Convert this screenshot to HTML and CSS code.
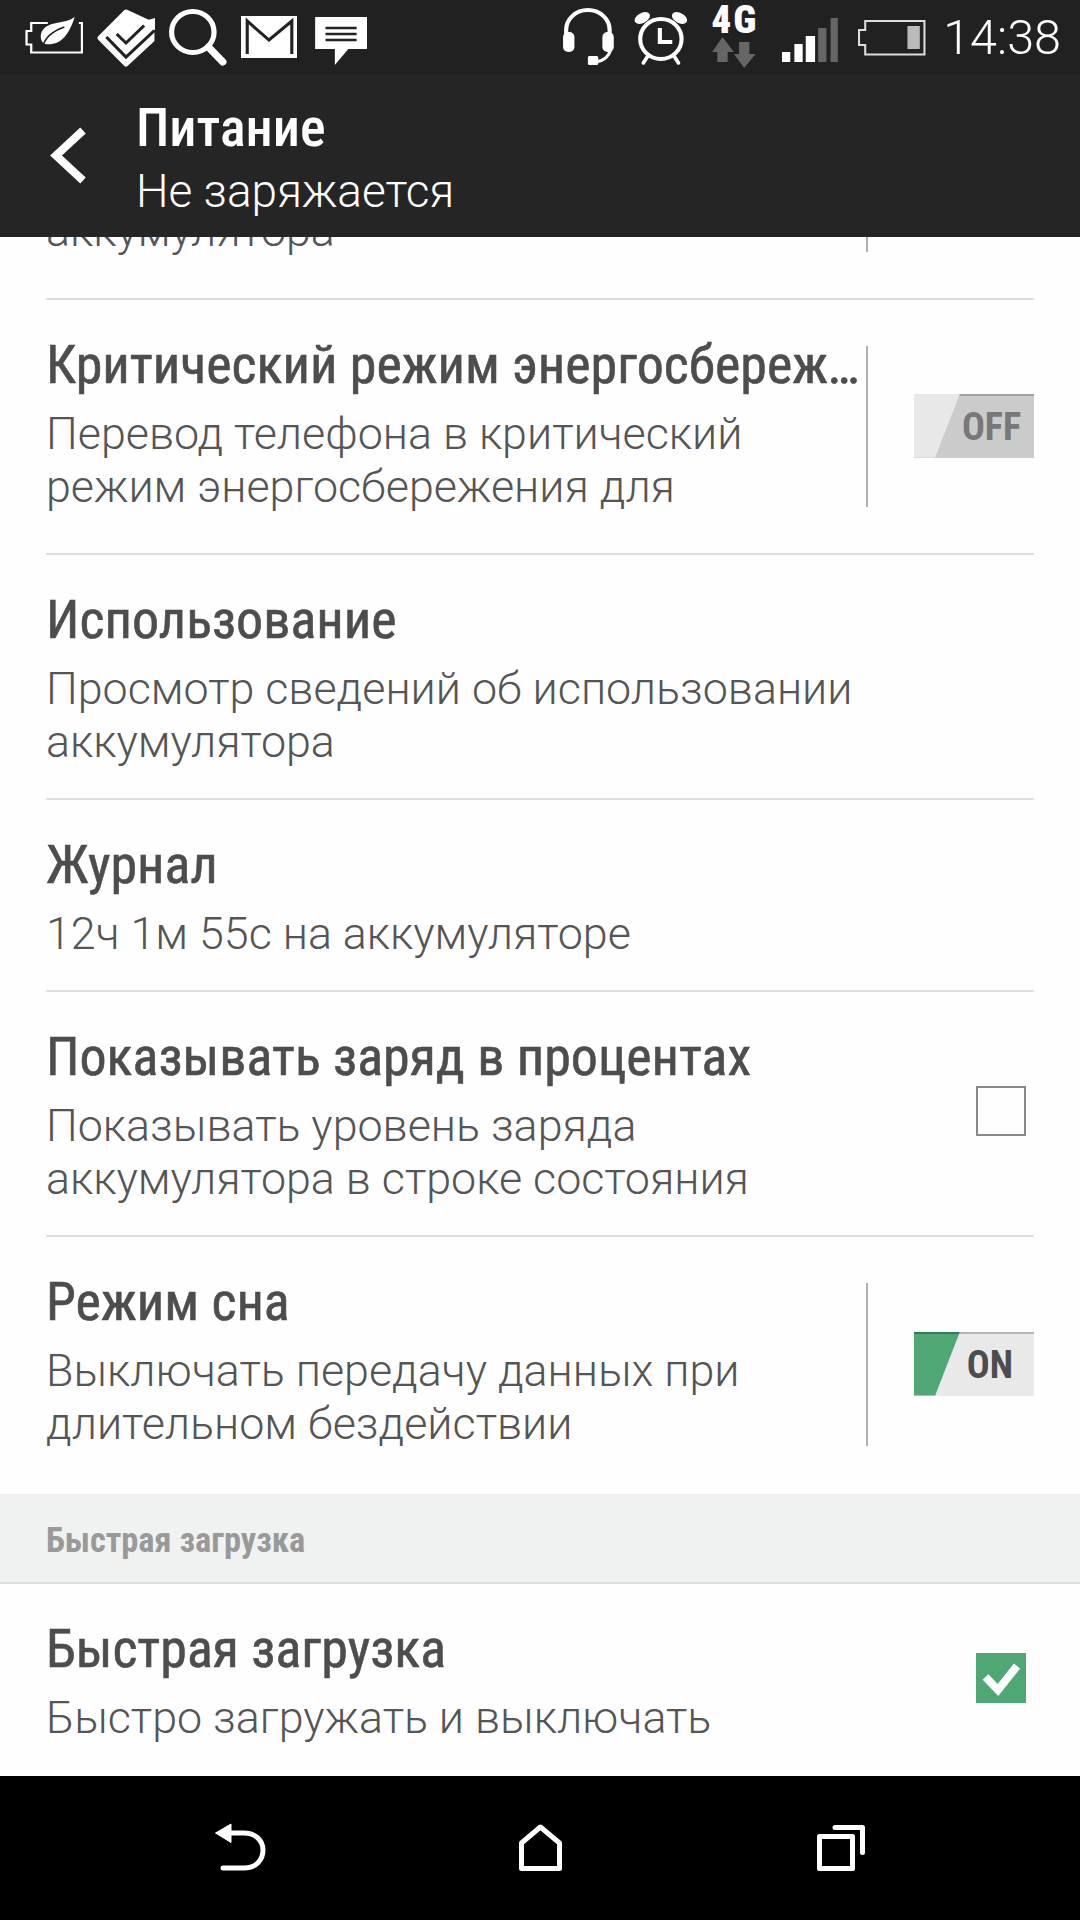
FILE: index.html
```html
<!DOCTYPE html>
<html lang="ru">
<head>
  <meta charset="UTF-8" />
  <title>Питание</title>
  <link rel="stylesheet" href="styles.css">
</head>
<body>
  <div class="phone">

    <!-- Status bar -->
    <div class="status-bar">
      <div class="status-group">
        <svg class="icon" width="58" height="75" viewBox="24 0 56 75" preserveAspectRatio="none">
          <path d="M46 23 H30 V31 H25.5 V44.5 H30 V52.5 H79 V23 H76" fill="none" stroke="#fff" stroke-width="2.2"/>
          <path d="M72 17 C62 25 46 20 40 32 C38 38 40 42 43 44 C58 46 66 36 72 17Z" fill="#fff"/>
          <path d="M41 47 C43 38 51 31 62 27" fill="none" stroke="#222" stroke-width="1.6"/>
        </svg>
        <svg class="icon" width="58" height="75" viewBox="94 0 56 75" preserveAspectRatio="none">
          <path d="M122 12 L97 38 L122 64 L147 40 V24 Z" fill="#fff" stroke="#fff" stroke-width="5" stroke-linejoin="round"/>
          <polyline points="103,37 122,57 151,29" fill="none" stroke="#222" stroke-width="3"/>
          <polyline points="113,34 122,43 140,25" fill="none" stroke="#222" stroke-width="3"/>
          <path d="M136 22 L150 18 V30 L142 28 Z" fill="#fff"/>
        </svg>
        <svg class="icon" width="58" height="75" viewBox="164 0 56 75" preserveAspectRatio="none">
          <circle cx="187" cy="32" r="20.5" fill="none" stroke="#fff" stroke-width="5"/>
          <line x1="202" y1="47" x2="216" y2="62" stroke="#fff" stroke-width="7" stroke-linecap="round"/>
        </svg>
        <svg class="icon" width="56" height="75" viewBox="234 0 54 75" preserveAspectRatio="none">
          <rect x="234" y="16" width="54" height="42" fill="#fff"/>
          <path d="M240 54 V21 L261 40 L283 21 V54" fill="none" stroke="#222" stroke-width="3"/>
        </svg>
        <svg class="icon" width="56" height="75" viewBox="302 0 54 75" preserveAspectRatio="none">
          <path d="M306 17 H356 V49 H338 L325 65 V49 H306 Z" fill="#fff"/>
          <path d="M316 28 H346 M316 34 H346 M316 40 H346" stroke="#222" stroke-width="2.4"/>
        </svg>
      </div>
      <div class="status-group">
        <svg class="icon" width="58" height="75" viewBox="562 0 56 75" preserveAspectRatio="none">
          <path d="M566 36 V30 A21 20 0 0 1 608 30 V36" fill="none" stroke="#fff" stroke-width="4"/>
          <rect x="563" y="32" width="11" height="20" rx="5" fill="#fff"/>
          <rect x="601" y="32" width="11" height="20" rx="5" fill="#fff"/>
          <path d="M609 50 Q606 60 595 62" fill="none" stroke="#fff" stroke-width="3"/>
          <rect x="587" y="56" width="10" height="9" rx="1.5" fill="#fff"/>
        </svg>
        <svg class="icon" width="60" height="75" viewBox="631 0 58 75" preserveAspectRatio="none">
          <circle cx="657" cy="39" r="20" fill="none" stroke="#fff" stroke-width="4"/>
          <path d="M656 28 V42 H668" fill="none" stroke="#fff" stroke-width="4"/>
          <ellipse cx="639" cy="18" rx="8" ry="5" transform="rotate(-30 639 18)" fill="#fff"/>
          <ellipse cx="675" cy="18" rx="8" ry="5" transform="rotate(30 675 18)" fill="#fff"/>
          <path d="M645 55 L640 63 M669 55 L674 63" stroke="#fff" stroke-width="3.5" stroke-linecap="round"/>
        </svg>
        <svg class="icon" width="60" height="75" viewBox="703 0 58 75" preserveAspectRatio="none">
          <text class="net-label" x="729" y="33" text-anchor="middle">4G</text>
          <path d="M717 37 L728 52 H722 V62 H712 V52 H707 Z" fill="#666"/>
          <path d="M738 68 L728 54 H733 V42 H743 V54 H749 Z" fill="#666"/>
        </svg>
        <svg class="icon" width="62" height="75" viewBox="774 0 60 75" preserveAspectRatio="none">
          <rect x="774" y="52" width="8" height="10" fill="#fff"/>
          <rect x="786" y="44" width="8" height="18" fill="#fff"/>
          <rect x="797" y="36" width="9" height="26" fill="#fff"/>
          <rect x="809" y="28" width="8" height="34" fill="#666"/>
          <rect x="821" y="18" width="7" height="44" fill="#666"/>
        </svg>
        <svg class="icon" width="68" height="75" viewBox="848 0 66 75" preserveAspectRatio="none">
          <path d="M855 21 H912.5 V54.5 H855 V45 H849 V30 H855 Z" fill="none" stroke="#ddd" stroke-width="2"/>
          <rect x="896" y="26" width="12" height="23" fill="#bbb"/>
        </svg>
        <span class="clock">14:38</span>
      </div>
    </div>

    <!-- Action bar -->
    <div class="action-bar">
      <svg class="back-btn" width="136" height="162" viewBox="0 75 136 162">
        <polyline points="83,130.5 56,155.5 83,180.5" fill="none" stroke="#fff" stroke-width="8"/>
      </svg>
      <div>
        <div class="action-title">Питание</div>
        <div class="action-sub">Не заряжается</div>
      </div>
    </div>

    <!-- Settings list -->
    <div class="list">
      <div class="row row-clipped">
        <div class="row-text">
          <div class="row-sub">аккумулятора</div>
        </div>
        <div class="row-switch"></div>
      </div>

      <div class="row">
        <div class="row-text">
          <div class="row-title">Критический режим энергосбережения</div>
          <div class="row-sub">Перевод телефона в критический<br>режим энергосбережения для</div>
        </div>
        <div class="row-switch">
          <div class="toggle toggle-off"><span class="toggle-thumb"></span><span class="toggle-label">OFF</span></div>
        </div>
      </div>

      <div class="row">
        <div class="row-text">
          <div class="row-title">Использование</div>
          <div class="row-sub">Просмотр сведений об использовании<br>аккумулятора</div>
        </div>
      </div>

      <div class="row">
        <div class="row-text">
          <div class="row-title">Журнал</div>
          <div class="row-sub">12ч 1м 55с на аккумуляторе</div>
        </div>
      </div>

      <div class="row">
        <div class="row-text">
          <div class="row-title">Показывать заряд в процентах</div>
          <div class="row-sub">Показывать уровень заряда<br>аккумулятора в строке состояния</div>
        </div>
        <div class="checkbox"></div>
      </div>

      <div class="row row-last">
        <div class="row-text">
          <div class="row-title">Режим сна</div>
          <div class="row-sub">Выключать передачу данных при<br>длительном бездействии</div>
        </div>
        <div class="row-switch">
          <div class="toggle toggle-on"><span class="toggle-thumb"></span><span class="toggle-label">ON</span></div>
        </div>
      </div>

      <div class="section-head">Быстрая загрузка</div>

      <div class="row row-last">
        <div class="row-text">
          <div class="row-title">Быстрая загрузка</div>
          <div class="row-sub">Быстро загружать и выключать</div>
        </div>
        <div class="checkbox checkbox-on">
          <svg width="50" height="50" viewBox="0 0 50 50">
            <polyline points="9.5,24 22,37 41,13" fill="none" stroke="#fff" stroke-width="8"/>
          </svg>
        </div>
      </div>
    </div>

    <!-- Navigation bar -->
    <div class="nav-bar">
      <svg width="60" height="144" viewBox="210 1776 60 144">
        <path d="M215.5 1833 L231 1824 V1842.5 Z" fill="#fff" stroke="#fff" stroke-width="1" stroke-linejoin="round"/>
        <path d="M229 1833 H244 C256 1833 263 1841 263 1850 C263 1860 256 1868 244 1868 H223" fill="none" stroke="#fff" stroke-width="5" stroke-linecap="round"/>
      </svg>
      <svg width="60" height="144" viewBox="510 1776 60 144">
        <path d="M540.4 1827 L521.5 1843 V1868.5 H559.5 V1843 Z" fill="none" stroke="#fff" stroke-width="5" stroke-linejoin="round"/>
      </svg>
      <svg width="60" height="144" viewBox="810 1776 60 144">
        <rect x="819.5" y="1836.5" width="33" height="32" fill="none" stroke="#fff" stroke-width="5" stroke-linejoin="round"/>
        <path d="M835 1827.5 H862.5 V1852.5" fill="none" stroke="#fff" stroke-width="5" stroke-linecap="round" stroke-linejoin="round"/>
      </svg>
    </div>
  </div>
</body>
</html>
```

FILE: styles.css
```css
* {
  box-sizing: border-box;
}

body {
  margin: 0;
  font-family: Roboto, sans-serif;
  background: #fefefe;
}

.phone {
  width: 1080px;
  height: 1920px;
  display: flex;
  flex-direction: column;
  overflow: hidden;
}

/* status bar */
.status-bar {
  height: 75px;
  padding: 0 19px 0 25px;
  background: #212121;
  display: flex;
  justify-content: space-between;
}

.status-group {
  display: flex;
  gap: 14px;
  align-items: center;
}

.icon {
  display: block;
}

.net-label {
  font-family: Roboto, sans-serif;
  font-weight: 900;
  font-stretch: 75%;
  font-size: 38px;
  letter-spacing: 2px;
  fill: #fff;
}

.clock {
  margin-left: 3px;
  font-size: 48.5px;
  font-weight: 300;
  color: #fff;
}

/* action bar */
.action-bar {
  height: 162px;
  background: #252525;
  display: flex;
  color: #fff;
}

.back-btn {
  display: block;
  flex: none;
}

.action-title {
  margin-top: 21px;
  font-size: 54px;
  line-height: 64px;
  font-weight: 500;
  font-stretch: 75%;
}

.action-sub {
  margin-top: 5px;
  font-size: 46px;
  line-height: 52px;
  font-weight: 300;
}

/* list */
.list {
  flex: 1;
  overflow: hidden;
}

.row {
  margin: 0 46px;
  display: flex;
  align-items: center;
  border-bottom: 2px solid #dedede;
}

.row-last {
  border-bottom: 0;
}

.row-text {
  flex: 1;
  min-width: 0;
  align-self: flex-start;
  padding: 35px 0 30px;
  color: #555;
}

.row-title {
  font-size: 54px;
  line-height: 60px;
  font-weight: 400;
  font-stretch: 75%;
  -webkit-text-stroke: 0.6px #4d4d4d;
  color: #4d4d4d;
  white-space: nowrap;
  overflow: hidden;
  text-overflow: ellipsis;
  margin-bottom: 12px;
}

.row-sub {
  font-size: 44.8px;
  line-height: 53px;
  font-weight: 300;
}

.row-clipped {
  height: 63px;
  overflow: hidden;
}

.row-clipped .row-text {
  align-self: flex-end;
  padding: 0 0 41px;
}

.row-clipped .row-switch {
  height: 15px;
  margin: 0 0 46px;
  align-self: flex-start;
}

.row-switch {
  flex: none;
  width: 168px;
  height: 161px;
  margin: 46px 0 46px 6px;
  border-left: 2px solid #b0b0b0;
  padding-left: 46px;
  display: flex;
  align-items: center;
}

.row-last .row-switch {
  height: 163px;
  margin-top: 46px;
  margin-bottom: 48px;
}

/* toggle */
.toggle {
  position: relative;
  width: 120px;
  height: 64px;
  margin-top: -2px;
  display: flex;
  align-items: center;
  justify-content: flex-end;
  font-size: 38px;
  font-weight: 700;
  font-stretch: 75%;
}

.toggle-thumb {
  position: absolute;
  left: 0;
  top: 0;
  bottom: 0;
  width: 46px;
  clip-path: polygon(0 0, 100% 0, 46% 100%, 0 100%);
}

.toggle-label {
  position: relative;
}

.toggle-off {
  background: #cbcbcb;
  border-top: 2px solid #a0a0a0;
  color: #787878;
  padding-right: 13px;
}

.toggle-off .toggle-thumb {
  background: #e8e8e8;
  top: -2px;
}

.toggle-on {
  background: #e9e9e9;
  border-top: 2px solid #b5b5b5;
  color: #4d4d4d;
  padding-right: 21px;
}

.toggle-on .toggle-thumb {
  top: -2px;
  background: linear-gradient(#2f7d50 2px, #4fa874 2px);
}

/* checkbox */
.checkbox {
  flex: none;
  width: 50px;
  height: 50px;
  margin: 0 8px 5px 0;
  border: 2px solid #888;
}

.checkbox-on {
  margin-bottom: 3px;
  border: 0;
  background: #4fa874;
}

.checkbox-on svg {
  display: block;
}

/* section header */
.section-head {
  height: 90px;
  padding: 0 46px;
  background: #f0f2f1;
  border-bottom: 2px solid #dedede;
  font-size: 34.4px;
  line-height: 92px;
  font-weight: 700;
  font-stretch: 75%;
  color: #999;
}

/* navigation */
.nav-bar {
  height: 144px;
  flex: none;
  padding-left: 210px;
  background: #000;
  display: flex;
  gap: 240px;
}
```
